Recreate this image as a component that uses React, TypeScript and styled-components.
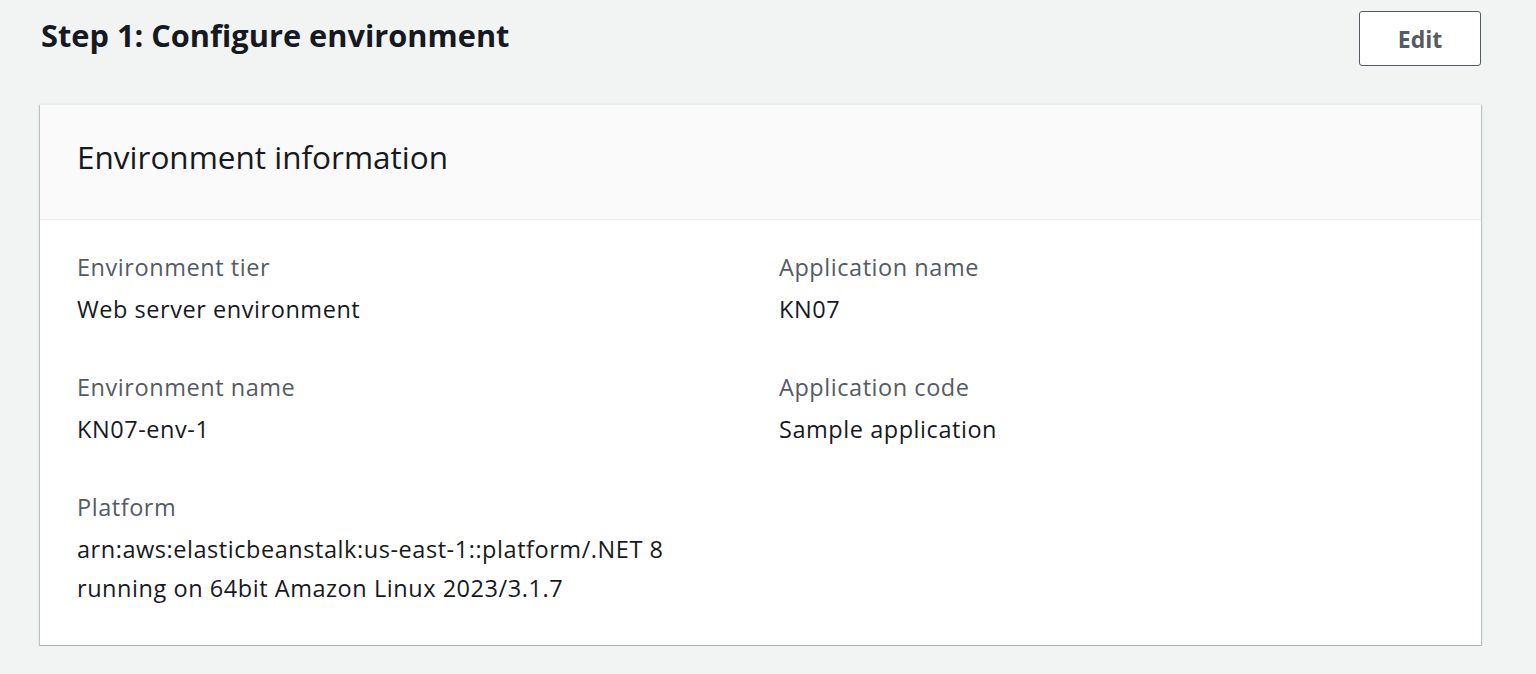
import React from "react";
import styled, { createGlobalStyle } from "styled-components";

const GlobalStyle = createGlobalStyle`
  html, body {
    margin: 0;
    padding: 0;
    background: #f2f3f3;
  }
  body {
    font-family: "Open Sans", "Noto Sans", sans-serif;
    color: #16191f;
  }
  * { box-sizing: border-box; }
`;

const Page = styled.div`
  padding: 11px 55px 0 40px;
`;

const HeaderRow = styled.div`
  display: flex;
  justify-content: space-between;
  align-items: flex-start;
`;

const Title = styled.h1`
  margin: 4px 0 0 1px;
  font-size: 30.75px;
  line-height: 40px;
  font-weight: 700;
  color: #16191f;
`;

const Button = styled.button`
  width: 122px;
  height: 55px;
  border: 1px solid #545b64;
  border-radius: 3px;
  background: #ffffff;
  color: #545b64;
  font-family: inherit;
  font-size: 23px;
  font-weight: 700;
  cursor: pointer;
  padding: 0;
`;

const Card = styled.section`
  margin-top: 38px;
  background: #ffffff;
  border-top: 1px solid #eaeded;
  border-bottom: 1px solid #aab7b8;
  box-shadow: 0 1px 2px 0 rgba(0, 28, 36, 0.35), 1px 1px 1px 0 rgba(0, 28, 36, 0.12),
    -1px 1px 1px 0 rgba(0, 28, 36, 0.12);
`;

const CardHeader = styled.div`
  background: #fafafa;
  border-bottom: 1px solid #eaeded;
  padding: 31px 37px 42px;
`;

const CardTitle = styled.h2`
  margin: 0;
  font-size: 31.5px;
  line-height: 41px;
  font-weight: 400;
  color: #16191f;
`;

const CardBody = styled.div`
  padding: 32px 36px 37px 37px;
  display: grid;
  grid-template-columns: 1fr 1fr;
  column-gap: 36px;
`;

const Column = styled.div`
  display: flex;
  flex-direction: column;
  gap: 43px;
`;

const Pair = styled.div`
  display: flex;
  flex-direction: column;
  gap: 8px;
`;

const Label = styled.div`
  font-size: 23.5px;
  line-height: 30px;
  letter-spacing: 0.55px;
  color: #545b64;
`;

const Value = styled.div`
  font-size: 23.5px;
  line-height: 39px;
  letter-spacing: 0.55px;
  color: #16191f;
`;

type Item = { label: string; lines: string[] };

const left: Item[] = [
  { label: "Environment tier", lines: ["Web server environment"] },
  { label: "Environment name", lines: ["KN07-env-1"] },
  {
    label: "Platform",
    lines: [
      "arn:aws:elasticbeanstalk:us-east-1::platform/.NET 8",
      "running on 64bit Amazon Linux 2023/3.1.7",
    ],
  },
];

const right: Item[] = [
  { label: "Application name", lines: ["KN07"] },
  { label: "Application code", lines: ["Sample application"] },
];

const renderItems = (items: Item[]) =>
  items.map((it) => (
    <Pair key={it.label}>
      <Label>{it.label}</Label>
      <Value>
        {it.lines.map((l, i) => (
          <div key={i}>{l}</div>
        ))}
      </Value>
    </Pair>
  ));

export default function App() {
  return (
    <>
      <GlobalStyle />
      <Page>
        <HeaderRow>
          <Title>Step 1: Configure environment</Title>
          <Button>Edit</Button>
        </HeaderRow>
        <Card>
          <CardHeader>
            <CardTitle>Environment information</CardTitle>
          </CardHeader>
          <CardBody>
            <Column>{renderItems(left)}</Column>
            <Column>{renderItems(right)}</Column>
          </CardBody>
        </Card>
      </Page>
    </>
  );
}
